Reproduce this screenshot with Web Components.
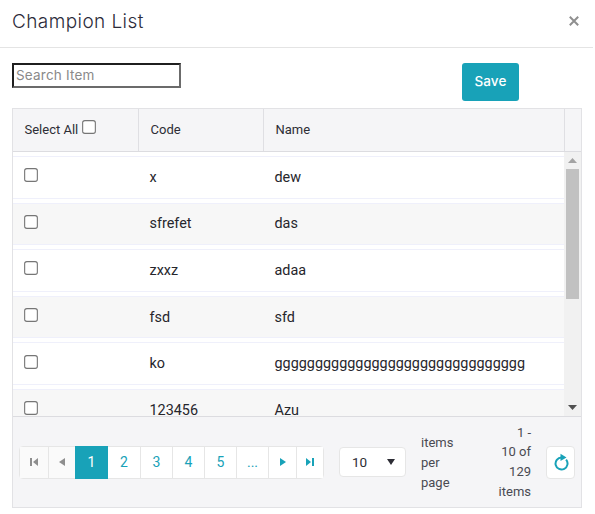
<!DOCTYPE html>
<html><head><meta charset="utf-8"><style>
html,body{margin:0;padding:0;background:#fff;height:514px;overflow:hidden}
body{font-family:"Roboto","Liberation Sans",sans-serif;color:#2d2d35}
</style></head><body>
<champion-dialog></champion-dialog>
<script>
const CB=`<svg class="cb" width="14" height="14" viewBox="0 0 14 14"><rect x=".65" y=".65" width="12.7" height="12.7" rx="2.2" fill="#fff" stroke="#767676" stroke-width="1.1"/></svg>`;
class GridRow extends HTMLElement{
  connectedCallback(){
    const alt=this.hasAttribute('alt');
    this.attachShadow({mode:'open'}).innerHTML=`<style>
    :host{display:grid;grid-template-columns:125.5px 125px 1fr;height:42.6px;margin-bottom:4px;box-sizing:border-box;border-top:1px solid #eff0fb;border-bottom:1px solid #eff0fb;background:${alt?'#f7f7f7':'#fff'};align-items:center;font-size:14.4px;color:#26262c;flex:none}
    .c{padding-left:11px;padding-bottom:4px;box-sizing:border-box;display:flex;align-items:center;height:100%}
    .t,.t2{padding-left:11px;white-space:nowrap}
    .cb{display:block}
    </style><div class="c">${CB}</div><div class="t">${this.getAttribute('code')}</div><div class="t2">${this.getAttribute('name')}</div>`;
  }
}
customElements.define('grid-row',GridRow);
class PageBtn extends HTMLElement{
  connectedCallback(){
    this.attachShadow({mode:'open'}).innerHTML=`<style>
    :host{display:flex;align-items:center;justify-content:center;height:31px;box-sizing:border-box;width:32px;background:#fff;color:#18a2b8;font-size:14px;border-left:1px solid #e6e6e6;flex:none}
    :host([first]){border-left:0}
    :host([active]){background:#18a2b8;color:#fff;border-left:0;width:33px;height:33px}
    :host([muted]){background:#fafafa;color:#8e8e8e}
    </style><slot></slot>`;
  }
}
customElements.define('page-btn',PageBtn);
class ChampionDialog extends HTMLElement{
  connectedCallback(){
    const rows=[['x','dew'],['sfrefet','das'],['zxxz','adaa'],['fsd','sfd'],['ko','ggggggggggggggggggggggggggggggg'],['123456','Azu']];
    this.attachShadow({mode:'open'}).innerHTML=`<style>
    :host{display:block;width:593px;height:514px;box-sizing:border-box;font-family:"Roboto","Liberation Sans",sans-serif}
    .head{height:48px;box-sizing:border-box;border-bottom:1px solid #e4e4e4;display:flex;align-items:center;justify-content:space-between;padding:0 14px 5px 12px}
    h1{margin:0;padding-top:1px;font:300 19px/1 "Inter","Open Sans",sans-serif;letter-spacing:.42px;color:#2c2b3a}
    .x{display:block}
    .tools{display:flex;height:60px;padding:15px 0 0 12px;box-sizing:border-box;align-items:flex-start}
    .search{width:169px;height:25px;box-sizing:border-box;border:2px solid;border-color:#1f1f1f #6b6b6b #6b6b6b #1f1f1f;font:400 13.5px/21px "Inter","Open Sans",sans-serif;color:#8a8a8a;padding-left:2px;letter-spacing:.2px;white-space:nowrap;overflow:hidden}
    .save{margin-left:281px;width:57px;height:38px;background:#18a2b8;border-radius:3px;color:#fff;font:500 13.5px/36px "Inter","Open Sans",sans-serif;letter-spacing:.1px;text-align:center}
    .grid{margin-left:12px;width:570px;height:400px;box-sizing:border-box;border:1px solid #e2e2e5;display:flex;flex-direction:column;background:#fff}
    .ghead{height:42px;flex:none;display:grid;grid-template-columns:126px 125px 301px 1fr;background:#f5f5f7;border-bottom:1px solid #dcdce0;box-sizing:content-box;font-size:13px;color:#2d2d35}
    .ghead>div{border-right:1px solid #dfdfe3;display:flex;align-items:center;padding:0 0 2px 11.5px;box-sizing:border-box}
    .ghead>div:last-child{border-right:0}
    .sel{gap:4px}
    .sel svg{position:relative;top:-2px}
    .body{flex:1;min-height:0;display:flex;border-bottom:1px solid #dcdce0;box-sizing:content-box}
    .rows{flex:1;min-width:0;overflow:hidden;padding-top:4px;display:flex;flex-direction:column}
    .sb{width:17px;flex:none;background:#f1f1f1;display:flex;flex-direction:column;align-items:center}
    .sb .a{height:17px;flex:none;display:flex;align-items:center;justify-content:center}
    .sb .th{width:13px;height:130px;background:#c1c1c1;flex:none}
    .sb .sp{flex:1}
    .foot{height:90px;flex:none;background:#f5f5f7;display:flex;align-items:center;box-sizing:border-box;padding:0 6px;font-size:13px;color:#4a4a52}
    .pager{display:flex;align-items:center;width:305px;height:33px;box-sizing:border-box;border:1px solid #e6e6e6;border-radius:4px;background:#fff;flex:none}
    .pager svg{display:block}
    .dd{margin-left:15px;width:67px;height:30px;box-sizing:border-box;border:1px solid #e6e6e6;border-radius:4px;background:#fff;display:flex;align-items:center;justify-content:space-between;padding:0 10px 0 12px;flex:none;color:#2d2d35;font-size:13.5px}
    .ipp{margin-left:15px;width:36px;line-height:19.7px;padding-top:2px;flex:none}
    .cnt{width:74px;line-height:19.7px;text-align:right;flex:none}
    .ref{margin-left:15px;width:29px;height:33px;box-sizing:border-box;border:1px solid #e6e6e6;border-radius:4px;background:#fff;display:flex;align-items:center;justify-content:center;flex:none}
    </style>
    <div class="head"><h1>Champion List</h1>
      <svg class="x" width="10" height="10" viewBox="0 0 10 10"><path d="M.8.8l8.400 8.400M9.200.8L.8 9.200" stroke="#8f8f8f" stroke-width="2" fill="none"/></svg></div>
    <div class="tools"><div class="search">Search Item</div><div class="save">Save</div></div>
    <div class="grid">
      <div class="ghead"><div class="sel">Select All ${CB}</div><div>Code</div><div>Name</div><div></div></div>
      <div class="body">
        <div class="rows">${rows.map((r,i)=>`<grid-row code="${r[0]}" name="${r[1]}"${i%2?' alt':''}></grid-row>`).join('')}</div>
        <div class="sb"><div class="a"><svg width="9" height="5" viewBox="0 0 9 5"><path d="M4.500 0L9 5H0z" fill="#a3a3a3"/></svg></div><div class="th"></div><div class="sp"></div><div class="a"><svg width="9" height="5" viewBox="0 0 9 5"><path d="M0 0h9L4.500 5z" fill="#505050"/></svg></div></div>
      </div>
      <div class="foot">
        <div class="pager">
          <page-btn first muted style="width:28px"><svg width="8" height="8" viewBox="0 0 8 8"><path d="M0 0h2v8H0zM8 0v8L3 4z" fill="#8e8e8e"/></svg></page-btn>
          <page-btn muted style="width:27px"><svg width="6" height="8" viewBox="0 0 6 8"><path d="M6 0v8L0 4z" fill="#8e8e8e"/></svg></page-btn>
          <page-btn active>1</page-btn><page-btn first>2</page-btn><page-btn>3</page-btn><page-btn>4</page-btn><page-btn>5</page-btn><page-btn>...</page-btn>
          <page-btn style="width:28px"><svg width="6" height="8" viewBox="0 0 6 8"><path d="M0 0v8l6-4z" fill="#18a2b8"/></svg></page-btn>
          <page-btn style="width:27px"><svg width="8" height="8" viewBox="0 0 8 8"><path d="M0 0v8l5-4zM6 0h2v8H6z" fill="#18a2b8"/></svg></page-btn>
        </div>
        <div class="dd"><span>10</span><svg width="8" height="6" viewBox="0 0 8 6"><path d="M0 0h8L4 6z" fill="#2d2d35"/></svg></div>
        <div class="ipp">items per page</div>
        <div class="cnt">1 -<br>10 of<br>129<br>items</div>
        <div class="ref"><svg width="16" height="18" viewBox="0 0 16 18"><path d="M8.500 4.500A6 6 0 1 0 13.100 6.600" fill="none" stroke="#18a2b8" stroke-width="2"/><path d="M7.500.8L13.500 4.500 7.500 8z" fill="#18a2b8"/></svg></div>
      </div>
    </div>`;
  }
}
customElements.define('champion-dialog',ChampionDialog);
</script></body></html>
